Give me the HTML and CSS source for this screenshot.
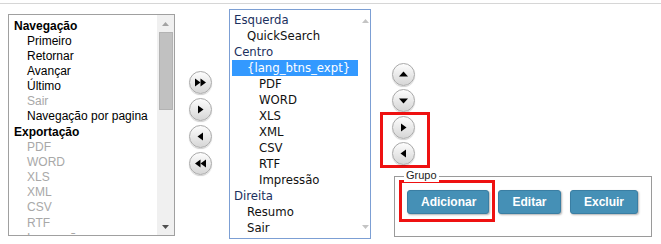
FILE: index.html
```html
<!DOCTYPE html>
<html lang="pt">
<head>
<meta charset="utf-8">
<link rel="stylesheet" href="styles.css">
</head>
<body>
<div class="topbar"></div>
<div class="main">
  <div class="listbox lb-left">
    <div class="lb-content">
      <div class="grp">Navegação</div>
      <div class="opt">Primeiro</div>
      <div class="opt">Retornar</div>
      <div class="opt">Avançar</div>
      <div class="opt">Último</div>
      <div class="opt dis">Sair</div>
      <div class="opt">Navegação por pagina</div>
      <div class="grp">Exportação</div>
      <div class="opt dis">PDF</div>
      <div class="opt dis">WORD</div>
      <div class="opt dis">XLS</div>
      <div class="opt dis">XML</div>
      <div class="opt dis">CSV</div>
      <div class="opt dis">RTF</div>
      <div class="opt dis">Impressão</div>
    </div>
    <div class="sbar">
      <div class="sarrow"><svg width="7" height="4" viewBox="0 0 7 4"><polygon points="0,4 3.5,0 7,4" fill="#a3a3a3"/></svg></div>
      <div class="sthumb"></div>
      <div class="sspace"></div>
      <div class="sarrow"><svg width="7" height="4" viewBox="0 0 7 4"><polygon points="0,0 7,0 3.5,4" fill="#505050"/></svg></div>
    </div>
  </div>

  <div class="movecol">
    <div class="cbtn"><svg width="23" height="23" viewBox="0 0 23 23"><polygon points="6,7.5 11.5,11.5 6,15.5" fill="#000"/><polygon points="11.5,7.5 17,11.5 11.5,15.5" fill="#000"/></svg></div>
    <div class="cbtn"><svg width="23" height="23" viewBox="0 0 23 23"><polygon points="9,7.5 14.5,11.5 9,15.5" fill="#000"/></svg></div>
    <div class="cbtn"><svg width="23" height="23" viewBox="0 0 23 23"><polygon points="14,7.5 8.5,11.5 14,15.5" fill="#000"/></svg></div>
    <div class="cbtn"><svg width="23" height="23" viewBox="0 0 23 23"><polygon points="11.5,7.5 6,11.5 11.5,15.5" fill="#000"/><polygon points="17,7.5 11.5,11.5 17,15.5" fill="#000"/></svg></div>
  </div>

  <div class="listbox lb-mid">
    <div class="mid-content">
      <div class="row g">Esquerda</div>
      <div class="row l1">QuickSearch</div>
      <div class="row g">Centro</div>
      <div class="row l1 sel">{lang_btns_expt}</div>
      <div class="row l2">PDF</div>
      <div class="row l2">WORD</div>
      <div class="row l2">XLS</div>
      <div class="row l2">XML</div>
      <div class="row l2">CSV</div>
      <div class="row l2">RTF</div>
      <div class="row l2">Impressão</div>
      <div class="row g">Direita</div>
      <div class="row l1">Resumo</div>
      <div class="row l1">Sair</div>
    </div>
    <div class="msbar">
      <svg width="7" height="4" viewBox="0 0 7 4"><polygon points="0,4 3.5,0 7,4" fill="#c4c4c4"/></svg>
      <svg width="7" height="4" viewBox="0 0 7 4"><polygon points="0,0 7,0 3.5,4" fill="#c4c4c4"/></svg>
    </div>
  </div>

  <div class="rightcol">
    <div class="updown">
      <div class="cbtn"><svg width="23" height="23" viewBox="0 0 23 23"><polygon points="7,13.5 11.5,8.5 16,13.5" fill="#000"/></svg></div>
      <div class="cbtn"><svg width="23" height="23" viewBox="0 0 23 23"><polygon points="7,9.5 16,9.5 11.5,14.5" fill="#000"/></svg></div>
    </div>
    <div class="redbox rb-arrows">
      <div class="cbtn"><svg width="23" height="23" viewBox="0 0 23 23"><polygon points="9,7.5 14.5,11.5 9,15.5" fill="#000"/></svg></div>
      <div class="cbtn"><svg width="23" height="23" viewBox="0 0 23 23"><polygon points="14,7.5 8.5,11.5 14,15.5" fill="#000"/></svg></div>
    </div>
    <div class="grupo">
      <span class="legend">Grupo</span>
      <div class="redbox rb-add"><button class="btn">Adicionar</button></div>
      <button class="btn btn-edit">Editar</button>
      <button class="btn btn-del">Excluir</button>
    </div>
  </div>
</div>
</body>
</html>
```
FILE: styles.css
```css
* { box-sizing: border-box; }
body {
  margin: 0;
  background: #fff;
  font-family: "Liberation Sans", Arial, sans-serif;
  width: 661px;
  height: 244px;
  overflow: hidden;
}
.topbar {
  margin-top: 3px;
  height: 1px;
  background: #d6d6d6;
}
.main {
  display: flex;
  align-items: flex-start;
  padding-left: 8px;
}
.listbox {
  display: flex;
  overflow: hidden;
  background: #fff;
}
.lb-left {
  margin-top: 10px;
  width: 167px;
  height: 222px;
  border: 1px solid #a0a0a0;
}
.lb-content {
  flex: 1;
  overflow: hidden;
  padding-top: 3.5px;
  font-size: 12px;
  line-height: 15.15px;
  color: #000;
  white-space: nowrap;
}
.grp {
  font-weight: bold;
  padding-left: 5px;
}
.opt { padding-left: 18px; }
.opt.dis { color: #a8a8a8; }
.sbar {
  width: 17px;
  flex: none;
  background: #f0f0f0;
  display: flex;
  flex-direction: column;
}
.sarrow {
  height: 17px;
  display: flex;
  align-items: center;
  justify-content: center;
}
.sthumb {
  height: 78px;
  margin: 0 1px 0 2px;
  background: #c1c1c1;
  border: 1px solid #b3b3b3;
}
.sspace { flex: 1; }

.movecol {
  margin: 67px 0 0 14px;
  display: flex;
  flex-direction: column;
  gap: 4px;
}
.cbtn {
  width: 23px;
  height: 23px;
  border-radius: 50%;
  border: 1px solid #a9a9a9;
  background: linear-gradient(#fdfdfd, #d6d6d6);
  box-shadow: 0 1px 1px rgba(0,0,0,0.18);
  display: flex;
  align-items: center;
  justify-content: center;
}
.cbtn svg { display: block; flex: none; }

.lb-mid {
  margin: 5px 0 0 17px;
  width: 142px;
  height: 230px;
  border: 1px solid #7c9fd4;
}
.mid-content {
  flex: 1;
  overflow: hidden;
  padding: 2px 0 0 2px;
  font-family: "DejaVu Sans", Verdana, sans-serif;
  font-size: 11.7px;
  line-height: 16px;
  color: #111;
  white-space: nowrap;
}
.row { height: 16px; }
.row.g { padding-left: 2px; color: #1b2f5e; }
.row.l1 { padding-left: 15px; }
.row.l2 { padding-left: 27px; }
.row.sel { background: #3399ff; color: #fff; }
.msbar {
  width: 12px;
  flex: none;
  display: flex;
  flex-direction: column;
  justify-content: space-between;
  align-items: flex-end;
  padding: 9px 1px 9px 0;
}
.msbar svg { display: block; }

.rightcol {
  margin: 59px 0 0 9px;
  display: flex;
  flex-direction: column;
  align-items: flex-start;
}
.updown {
  padding-left: 12px;
  display: flex;
  flex-direction: column;
  gap: 3px;
}
.redbox { border: 3px solid #ee1111; }
.rb-arrows {
  padding: 1px 12px 0 9px;
  display: flex;
  flex-direction: column;
  gap: 3px;
}
.grupo {
  position: relative;
  margin: 8px 0 0 14px;
  width: 258px;
  height: 61px;
  border: 1px solid #9a9a9a;
  padding: 3px 0 0 4px;
  display: flex;
  align-items: flex-start;
}
.legend {
  position: absolute;
  top: -8px;
  left: 9px;
  padding: 0 2px;
  background: #fff;
  font-size: 11px;
  line-height: 13px;
  color: #222;
}
.rb-add { padding: 7px 3px 5px 5px; }
.btn {
  height: 24px;
  padding: 0 13px;
  margin: 0;
  border: 1px solid #3a7ea3;
  border-radius: 3px;
  background: #4590b6;
  color: #fff;
  font-family: "Liberation Sans", Arial, sans-serif;
  font-weight: bold;
  font-size: 12px;
  box-shadow: 1px 1px 2px rgba(0,0,0,0.3);
}
.rb-add .btn { width: 82px; }
.btn-edit { margin: 10px 0 0 3px; width: 63px; }
.btn-del { margin: 10px 0 0 9px; width: 68px; }
```
